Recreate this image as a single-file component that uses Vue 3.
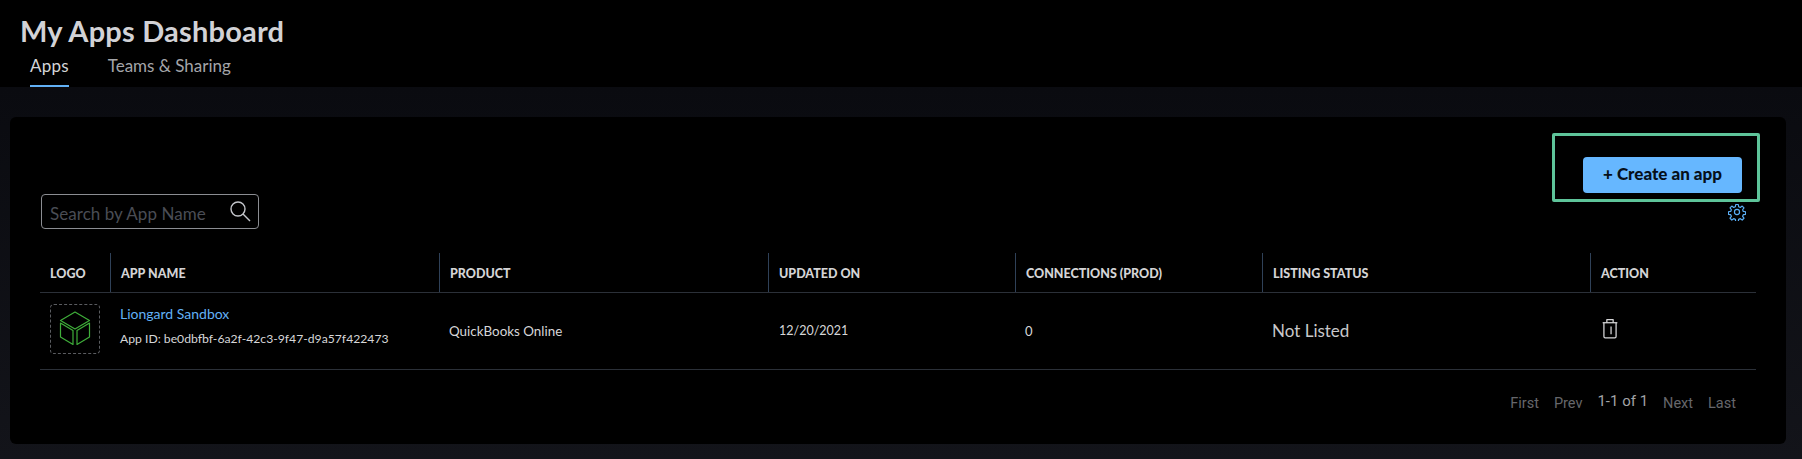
<template>
  <div class="page">
    <header class="top">
      <h1 class="title">My Apps Dashboard</h1>
      <nav class="tabs">
        <a class="tab active">Apps</a>
        <a class="tab">Teams &amp; Sharing</a>
      </nav>
    </header>

    <main class="content">
      <section class="card">
        <div class="toolbar">
          <div class="search">
            <span class="search-text">Search by App Name</span>
            <svg class="search-icon" width="22" height="22" viewBox="0 0 22 22" fill="none" stroke="#c4c6cb" stroke-width="1.4">
              <circle cx="9" cy="9" r="7" />
              <path d="M14 14l7 7" />
            </svg>
          </div>
          <div class="actions">
            <button class="create">+ Create an app</button>
            <svg class="gear" width="18" height="18" viewBox="0 0 24 24" fill="none" stroke="#5aaef5" stroke-width="1.6" stroke-linejoin="round">
              <circle cx="12" cy="12" r="3.4" />
              <path d="M10.3 2h3.4l.5 3 2.2.9 2.5-1.8 2.4 2.4-1.8 2.5.9 2.2 3 .5v3.4l-3 .5-.9 2.2 1.8 2.5-2.4 2.4-2.5-1.8-2.2.9-.5 3h-3.4l-.5-3-2.2-.9-2.5 1.8-2.4-2.4 1.8-2.5-.9-2.2-3-.5v-3.4l3-.5.9-2.2-1.8-2.5 2.4-2.4 2.5 1.8 2.2-.9z" />
            </svg>
            <div class="highlight"></div>
          </div>
        </div>

        <div class="table">
          <div class="row head">
            <div v-for="c in columns" :key="c" class="th">{{ c }}</div>
          </div>
          <div class="row body">
            <div class="td">
              <div class="logo">
                <svg width="32" height="35" viewBox="0 0 32 35" fill="none" stroke="#3fae3a" stroke-width="1.2" stroke-linejoin="round">
                  <path d="M1.5 9.5L16 1L30.5 9.5L16 18z" />
                  <path d="M1.5 12L14 19.5V33.5L1.5 26z" />
                  <path d="M30.5 12L18 19.5V33.5L30.5 26z" />
                </svg>
              </div>
            </div>
            <div class="td name">
              <a class="app-link">{{ app.name }}</a>
              <span class="app-id">App ID: {{ app.id }}</span>
            </div>
            <div class="td product">{{ app.product }}</div>
            <div class="td date">{{ app.updated }}</div>
            <div class="td">{{ app.connections }}</div>
            <div class="td status">{{ app.status }}</div>
            <div class="td">
              <svg class="trash" width="18" height="21" viewBox="0 0 16 20" fill="none" stroke="#d6d6d8" stroke-width="1.2" stroke-linejoin="round">
                <path d="M1 4.5h14" />
                <path d="M5 4.5V1.5h6v3" />
                <path d="M2.2 4.5v13.2a1.2 1.2 0 0 0 1.2 1.2h9.2a1.2 1.2 0 0 0 1.2-1.2V4.5" />
                <path d="M9 8v7.5" />
              </svg>
            </div>
          </div>
        </div>

        <div class="pager">
          <span class="pg">First</span>
          <span class="pg">Prev</span>
          <span class="pg current">1-1 of 1</span>
          <span class="pg">Next</span>
          <span class="pg">Last</span>
        </div>
      </section>
    </main>
  </div>
</template>

<script setup>
const columns = ['LOGO', 'APP NAME', 'PRODUCT', 'UPDATED ON', 'CONNECTIONS (PROD)', 'LISTING STATUS', 'ACTION']

const app = {
  name: 'Liongard Sandbox',
  id: 'be0dbfbf-6a2f-42c3-9f47-d9a57f422473',
  product: 'QuickBooks Online',
  updated: '12/20/2021',
  connections: '0',
  status: 'Not Listed',
}
</script>

<style>
html, body { margin: 0; background: #000; }
</style>

<style scoped>
.page {
  width: 1802px; height: 459px; overflow: hidden;
  font-family: Lato, "Open Sans", sans-serif;
  color: #d8d8da;
  background: #000;
}
.top { height: 87px; padding-left: 20px; box-sizing: border-box; background: #000; }
.title {
  margin: 0; padding-top: 14px;
  font-size: 29px; line-height: 34px; font-weight: 700; letter-spacing: .2px;
  color: #d2d2d6;
}
.tabs { display: flex; gap: 39px; padding-left: 10px; margin-top: 4px; }
.tab {
  height: 35px; box-sizing: border-box; padding-top: 2px;
  font-size: 17px; line-height: 24px; color: #a4a5a9;
}
.tab.active { color: #d4d5d8; border-bottom: 2px solid #62b1f6; letter-spacing: .2px; }

.content {
  height: 372px; box-sizing: border-box;
  padding: 30px 16px 15px 10px;
  background: linear-gradient(#0a0b10, #13141a);
}
.card {
  height: 327px; box-sizing: border-box;
  padding: 16px 30px 0;
  background: #000; border-radius: 6px;
}

.toolbar { display: flex; justify-content: space-between; align-items: flex-end; height: 120px; }
.search {
  width: 218px; height: 35px; box-sizing: border-box; margin: 0 0 24px 1px;
  display: flex; align-items: center; justify-content: space-between;
  padding: 0 7px 0 8px;
  border: 1px solid #8b8d92; border-radius: 4px;
}
.search-text { font-size: 17px; color: #4a4d55; letter-spacing: .05px; padding-top: 3px; }
.search-icon { margin-top: -2px; }

.actions {
  position: relative; align-self: flex-start;
  display: flex; flex-direction: column; align-items: flex-end;
  width: 159px; margin-right: 14px; padding-top: 24px;
}
.create {
  width: 159px; height: 36px; padding: 0 0 3px;
  border: none; border-radius: 4px;
  background: #66b7ff; color: #06101a;
  font-family: inherit; font-size: 17px; font-weight: 900;
}
.gear { margin: 10px -4px 0 0; }
.highlight {
  position: absolute; left: -31px; top: 0;
  width: 208px; height: 69px; box-sizing: border-box;
  border: 3px solid #5ec49a; border-radius: 2px;
}

.table { width: 1716px; }
.row {
  display: grid;
  grid-template-columns: 70px 329px 329px 247px 247px 328px 1fr;
  border-bottom: 1px solid #2b3038;
}
.head { height: 39px; }
.th {
  display: flex; align-items: center;
  padding: 2px 0 0 10px;
  border-left: 1px solid #2f4158;
  font-size: 12.5px; font-weight: 900; color: #d4d4d6;
}
.th:first-child { border-left: none; }
.body { height: 76px; }
.td {
  display: flex; align-items: center;
  padding: 0 0 1px 10px;
  font-size: 13px; color: #d6d6d8;
}
.logo {
  width: 50px; height: 50px; box-sizing: border-box; margin: 0 0 4px 0;
  display: flex; align-items: center; justify-content: center;
  border: 1px dashed #5a5c60; border-radius: 4px;
}
.name { flex-direction: column; align-items: flex-start; justify-content: center; gap: 9px; padding-bottom: 12px; }
.app-link { font-size: 14px; color: #62b1f6; }
.app-id { font-size: 12.2px; letter-spacing: 0; }
.product { font-size: 13.4px; }
.date { font-size: 12.5px; padding-left: 11px; }
.status { font-size: 17px; color: #c8c8ca; }
.trash { margin: 0 0 5px 1px; }

.pager {
  display: flex; justify-content: flex-end; align-items: center; gap: 15px;
  padding: 24px 20px 0 0;
  font-family: Roboto, sans-serif; font-size: 14.5px; color: #66676b;
}
.current { font-size: 15px; color: #a2a3a6; position: relative; top: -2px; }
</style>
